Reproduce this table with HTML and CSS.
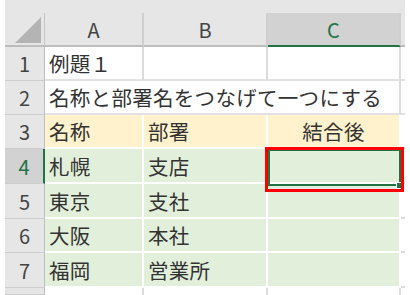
FILE: index.html
```html
<!DOCTYPE html>
<html lang="ja">
<head>
    <meta charset="UTF-8">
    <title>例題 1</title>
    <link rel="stylesheet" href="styles.css">
</head>
<body>

<div class="sheet">
    <div class="top-band"></div>

    <!-- column headers -->
    <div class="row h34">
        <div class="corner">
            <svg width="39" height="32" viewBox="0 0 39 32"><polygon points="36,4 36,30 10,30" fill="#b4b4b4"/></svg>
        </div>
        <div class="col-head">A</div>
        <div class="col-head">B</div>
        <div class="col-head selected">C</div>
        <div class="col-head edge"></div>
    </div>

    <div class="row h34">
        <div class="row-head">1</div>
        <div class="cell">例題１</div>
        <div class="cell"></div>
        <div class="cell"></div>
        <div class="cell edge"></div>
    </div>

    <div class="row h34">
        <div class="row-head">2</div>
        <div class="cell span3">名称と部署名をつなげて一つにする</div>
        <div class="cell edge"></div>
    </div>

    <div class="row h34 gold">
        <div class="row-head">3</div>
        <div class="cell">名称</div>
        <div class="cell">部署</div>
        <div class="cell center">結合後</div>
        <div class="cell edge"></div>
    </div>

    <div class="row h35 green">
        <div class="row-head selected">4</div>
        <div class="cell">札幌</div>
        <div class="cell">支店</div>
        <div class="cell"></div>
        <div class="cell edge"></div>
    </div>

    <div class="row h35 green">
        <div class="row-head">5</div>
        <div class="cell">東京</div>
        <div class="cell">支社</div>
        <div class="cell"></div>
        <div class="cell edge"></div>
    </div>

    <div class="row h34 green">
        <div class="row-head">6</div>
        <div class="cell">大阪</div>
        <div class="cell">本社</div>
        <div class="cell"></div>
        <div class="cell edge"></div>
    </div>

    <div class="row h35 green">
        <div class="row-head">7</div>
        <div class="cell">福岡</div>
        <div class="cell">営業所</div>
        <div class="cell"></div>
        <div class="cell edge"></div>
    </div>

    <!-- next row, only its top edge shows -->
    <div class="row h8">
        <div class="row-head"></div>
        <div class="cell"></div>
        <div class="cell"></div>
        <div class="cell"></div>
        <div class="cell edge"></div>
    </div>

    <!-- active cell C4 -->
    <div class="active-cell"></div>
    <div class="fill-handle"></div>
    <div class="mark"></div>
</div>

</body>
</html>
```

FILE: styles.css
```css
* {
    box-sizing: border-box;
}
body {
    margin: 0;
    background-color: #ffffff;
    font-family: 'Noto Sans CJK JP', 'Noto Sans', sans-serif;
    overflow: hidden;
}
.sheet {
    position: relative;
    margin-left: 5px;
    width: 400px;
}
.top-band {
    height: 13px;
    background-color: #e6e6e6;
}
.row {
    display: grid;
    grid-template-columns: 40px 99px 124px 133px 4px;
}
.h34 {
    height: 34px;
}
.h35 {
    height: 35px;
}
.h8 {
    height: 7px;
}
.h8 .cell {
    border-bottom: none;
}
.corner {
    background-color: #e6e6e6;
    border-right: 1px solid #c4c4c4;
    border-bottom: 2px solid #bdbdbd;
}
.corner svg {
    display: block;
}
.col-head {
    background-color: #e6e6e6;
    border-right: 2px solid #cfcfcf;
    border-bottom: 2px solid #bdbdbd;
    display: flex;
    align-items: center;
    justify-content: center;
    font-size: 20px;
    color: #444444;
}
.col-head.selected {
    background-color: #d2d2d2;
    color: #217346;
    border-bottom-color: #217346;
}
.col-head.edge {
    border-right: none;
}
.row-head {
    background-color: #e6e6e6;
    border-right: 1px solid #bdbdbd;
    border-bottom: 1px solid #cdcdcd;
    display: flex;
    align-items: center;
    justify-content: center;
    font-size: 20px;
    color: #444444;
}
.row-head.selected {
    background-color: #d2d2d2;
    color: #217346;
    border-right: 2px solid #217346;
}
.cell {
    border-right: 2px solid #dcdcdc;
    border-bottom: 2px solid #e2e2e2;
    padding-left: 4px;
    display: flex;
    align-items: center;
    font-size: 20.5px;
    letter-spacing: 0.3px;
    color: #333333;
    white-space: nowrap;
}
.cell.span3 {
    grid-column: span 3;
}
.cell.center {
    justify-content: center;
    padding-left: 0;
}
.cell.edge {
    border-right: none;
    padding: 0;
}
.gold .cell {
    background-color: #fff2cc;
    border-color: #ffffff;
}
.green .cell {
    background-color: #e2efda;
    border-color: #ffffff;
}
.gold .cell.edge,
.green .cell.edge {
    background-color: #ffffff;
    border-bottom-color: #dcdcdc;
}
.active-cell {
    position: absolute;
    left: 263px;
    top: 149px;
    width: 133px;
    height: 37px;
    border: 2px solid #217346;
}
.fill-handle {
    position: absolute;
    left: 391px;
    top: 182px;
    width: 7px;
    height: 7px;
    background-color: #217346;
    border: 1px solid #ffffff;
}
.mark {
    position: absolute;
    left: 260px;
    top: 147px;
    width: 139px;
    height: 45px;
    border: 3px solid #ff0000;
}
```
